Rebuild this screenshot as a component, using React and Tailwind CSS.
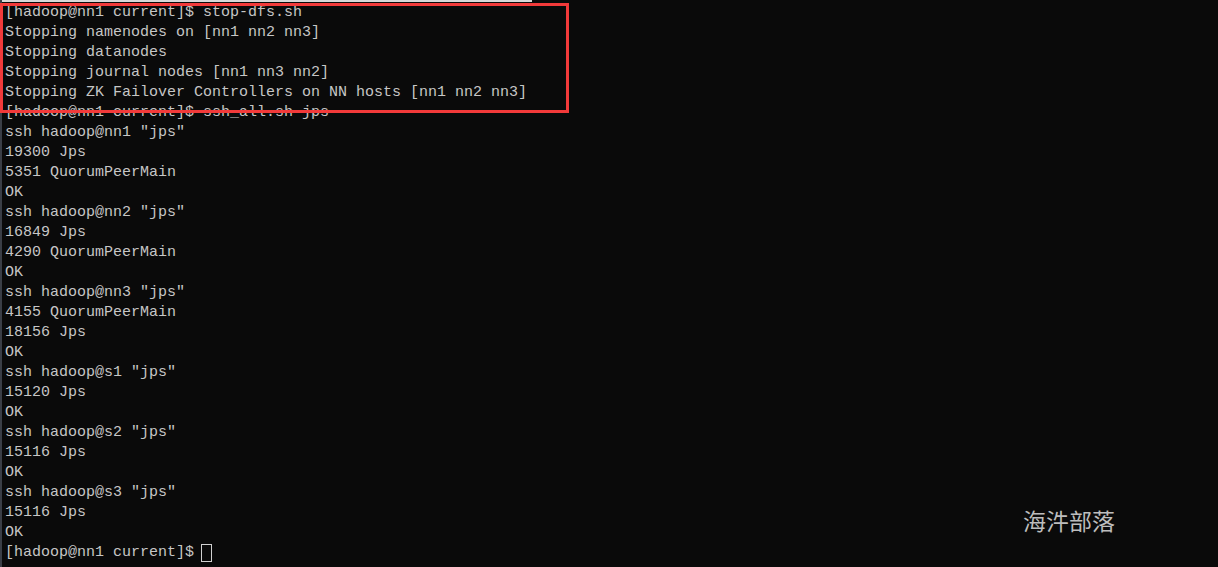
import React from 'react';

const lines = [
  '[hadoop@nn1 current]$ stop-dfs.sh',
  'Stopping namenodes on [nn1 nn2 nn3]',
  'Stopping datanodes',
  'Stopping journal nodes [nn1 nn3 nn2]',
  'Stopping ZK Failover Controllers on NN hosts [nn1 nn2 nn3]',
  '[hadoop@nn1 current]$ ssh_all.sh jps',
  'ssh hadoop@nn1 "jps"',
  '19300 Jps',
  '5351 QuorumPeerMain',
  'OK',
  'ssh hadoop@nn2 "jps"',
  '16849 Jps',
  '4290 QuorumPeerMain',
  'OK',
  'ssh hadoop@nn3 "jps"',
  '4155 QuorumPeerMain',
  '18156 Jps',
  'OK',
  'ssh hadoop@s1 "jps"',
  '15120 Jps',
  'OK',
  'ssh hadoop@s2 "jps"',
  '15116 Jps',
  'OK',
  'ssh hadoop@s3 "jps"',
  '15116 Jps',
  'OK',
];

const App = () => {
  return (
    <div className="relative w-[1218px] h-[567px] bg-[#0a0a0a] overflow-hidden flex">
      {/* left window edge */}
      <div className="w-[2px] h-full bg-[#3a3e46]" />

      <div className="flex-1 flex flex-col">
        {/* strip of the window above */}
        <div className="h-[2px] w-[530px] bg-[#d8d8d8]" />

        <div className="pt-[1px] pl-[3px] font-['Liberation_Mono','Courier_New',monospace] text-[15px] leading-[20px] text-[#c6c6c6] whitespace-pre">
          {lines.map((line, i) => (
            <div key={i}>{line}</div>
          ))}
          <div className="flex items-center">
            <span>[hadoop@nn1 current]$</span>
            <span className="inline-block ml-[7px] w-[11px] h-[18px] border border-[#d0d0d0]" />
          </div>
        </div>
      </div>

      {/* highlight box */}
      <div className="absolute left-0 top-[3px] w-[569px] h-[110px] border-[3px] border-[#f23a3a]" />

      {/* watermark */}
      <div className="absolute left-[1023px] top-[505px] text-[23px] leading-[30px] text-[#bdbdbd] font-['Noto_Sans_CJK_SC',serif]">
        海汼部落
      </div>
    </div>
  );
};

export default App;
